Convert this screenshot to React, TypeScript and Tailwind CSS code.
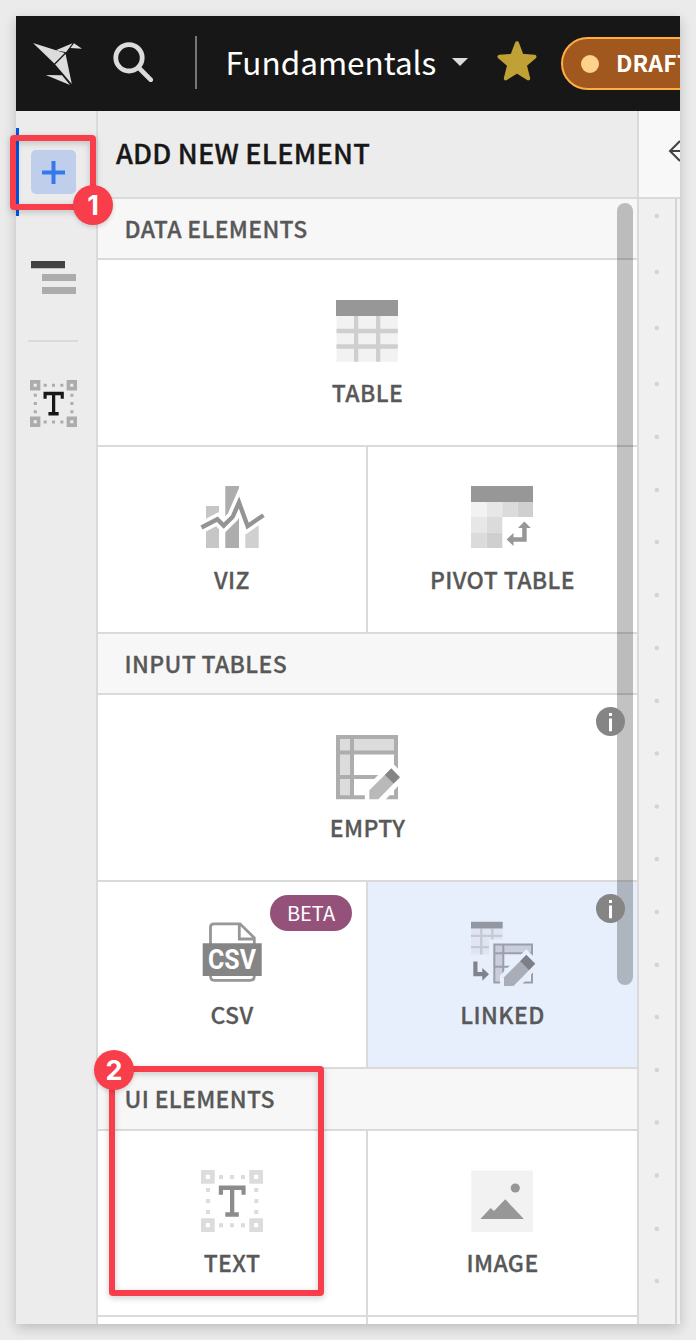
import type { ReactNode } from "react";

function BirdLogo() {
  return (
    <svg className="h-[42px] w-[49px] shrink-0" viewBox="0 0 49 42" fill="#dcdcdc">
      <path d="M0 0 31.7 10 21.3 20.4Z" />
      <path d="M22.8 7.2 39.5.3 33 9.2Z" />
      <path d="M41 .3 49.2 5.8 37.5 5Z" />
      <path d="M32.6 11 22.2 21.4 38.8 41Z" />
      <path d="M12.8 32 29 32.3 37 42Z" />
    </svg>
  );
}

function SearchIcon() {
  return (
    <svg className="h-10 w-10 shrink-0" viewBox="0 0 40 40" fill="none" stroke="#dcdcdc">
      <circle cx="16" cy="15.8" r="13.2" strokeWidth="4.8" />
      <path d="M25.5 25.5 37.8 37.8" strokeWidth="4.6" strokeLinecap="round" />
    </svg>
  );
}

function StarIcon() {
  return (
    <svg className="h-10 w-10 shrink-0" viewBox="0 0 40 40">
      <path
        d="M20 2.2 24.7 14.8 37.5 15.7 27.8 24 31.2 37.4 20 30.2 8.8 37.4 12.2 24 2.5 15.7 15.3 14.8Z"
        fill="#c0a136"
        stroke="#c0a136"
        strokeWidth="4"
        strokeLinejoin="round"
      />
    </svg>
  );
}

function OutlineIcon() {
  return (
    <svg className="h-[34px] w-[45px]" viewBox="0 0 45 34">
      <path d="M0 0H34V7.2H0Z" fill="#424242" />
      <path d="M11 13H45V20H11ZM11 26H45V33H11Z" fill="#acacac" />
    </svg>
  );
}

function TextIcon({ className, frame, glyph }: { className: string; frame: string; glyph: string }) {
  return (
    <svg className={className} viewBox="0 0 62 62">
      <g fill="none" stroke={frame} strokeWidth="4.8">
        <path d="M2.4 2.4h8.9v8.9h-8.9zM50.7 2.4h8.9v8.9h-8.9zM2.4 50.7h8.9v8.9h-8.9zM50.7 50.7h8.9v8.9h-8.9z" />
      </g>
      <path
        fill={frame}
        d="M18 5h4v4h-4zM29 5h4v4h-4zM40 5h4v4h-4zM18 53.3h4v4h-4zM29 53.3h4v4h-4zM40 53.3h4v4h-4zM5 18h4v4H5zM5 29h4v4H5zM5 40h4v4H5zM53.3 18h4v4h-4zM53.3 29h4v4h-4zM53.3 40h4v4h-4z"
      />
      <path fill={glyph} d="M17.8 15.6H44.6V24.7H40.5V20H33.3V42.3H37.8V46.7H24.3V42.3H29V20H22V24.7H17.8Z" />
    </svg>
  );
}

function TableIcon() {
  return (
    <svg className="h-[62px] w-[62px]" viewBox="0 0 62 62">
      <path d="M.5 15H61.8V61.8H.5Z" fill="#f2f2f2" />
      <path d="M18 15H22.3V61.8H18ZM40 15H44.3V61.8H40ZM.5 28.7H61.8V33.2H.5ZM.5 44.3H61.8V48.7H.5Z" fill="#cfcfcf" />
      <path d="M0 0H62V16H0Z" fill="#979797" />
    </svg>
  );
}

function VizIcon() {
  const line = "M.5 41.5 16.3 33.2 22.7 39.6 31.7 30.8 38 16.5 46.6 40 62.5 29.2";
  return (
    <svg className="h-[62px] w-[62px] -translate-y-px overflow-visible" viewBox="0 0 62 62" fill="none">
      <path d="M5 20H18V62H5Z" fill="#c6c6c6" />
      <path d="M24.3 0H38V62H24.3Z" fill="#adadad" />
      <path d="M44.3 36H57.7V62H44.3Z" fill="#d0d0d0" />
      <path d={line} stroke="#fff" strokeWidth="11.5" />
      <path d={line} stroke="#949494" strokeWidth="4.4" />
    </svg>
  );
}

function PivotIcon() {
  return (
    <svg className="h-[62px] w-[62px] -translate-y-px" viewBox="0 0 62 62">
      <path d="M0 16H15.7V31H0Z" fill="#f2f2f2" />
      <path d="M15.7 16H31.3V31H15.7ZM0 31H15.7V46.7H0Z" fill="#e7e7e7" />
      <path d="M31.3 16H46.7V31H31.3ZM15.7 31H31.3V46.7H15.7ZM0 46.7H15.7V62H0Z" fill="#dbdbdb" />
      <path d="M46.7 16H62V31H46.7ZM15.7 46.7H31.3V62H15.7Z" fill="#cfcfcf" />
      <path d="M0 0H62V16H0Z" fill="#979797" />
      <path
        d="M53.4 35.6 59.8 42H55.7V55.7H42.5V60L35.6 53.4 42.5 47V51.2H51.2V42H47Z"
        fill="#979797"
      />
    </svg>
  );
}

function EmptyIcon() {
  return (
    <svg className="h-[65px] w-[65px] shrink-0" viewBox="0 0 65 65">
      <path d="M0 0H62V64.3H0Z" fill="#adadad" />
      <path d="M4 4H14V15.6H4ZM18 4H58V15.6H18ZM4 19.6H14V40H4ZM4 44H14V60.3H4Z" fill="#dcdcdc" />
      <path d="M18 19.6H58V40H18ZM18 44H58V60.3H18Z" fill="#fff" />
      <path d="M55.3 33.3 33.3 55.3V66H42.3L64 42.3Z" fill="#fff" stroke="#fff" strokeWidth="9" />
      <path d="M48.7 40 33.3 55.3V64.2H42.3L57.5 48.8Z" fill="#b9b9b9" />
      <path d="M55.3 33.3 64 42.3 57.5 48.8 48.7 40Z" fill="#858585" />
    </svg>
  );
}

function CsvIcon() {
  return (
    <svg className="h-[62px] w-[62px]" viewBox="0 0 62 62">
      <path
        d="M9.5 22V5Q9.5 1.8 13 1.8H39L53.3 15.8V54.5Q53.3 58.3 49.5 58.3H13Q9.5 58.3 9.5 54Z M38.3 1.8V17H53.3"
        fill="none"
        stroke="#979797"
        strokeWidth="2.8"
      />
      <path d="M1.7 21.3H60.7V54H1.7Z" fill="#858585" />
      <text
        x="7"
        y="47.4"
        fill="#fff"
        textLength="48"
        lengthAdjust="spacingAndGlyphs"
        className="font-['Roboto'] text-[27.5px] font-bold"
      >
        CSV
      </text>
    </svg>
  );
}

function LinkedIcon() {
  return (
    <svg className="h-[65px] w-[65px] shrink-0 -translate-y-[0.5px]" viewBox="0 0 65 65">
      <path d="M0 7H31.5V18H18V33H0Z" fill="#e1e5f2" />
      <path d="M9 7H11.5V33H9ZM20.2 7H22.5V18H20.2ZM0 13.2H31.5V15.6H0ZM0 24.4H18V26.8H0Z" fill="#c5cad7" />
      <path d="M0 0H31.7V7H0Z" fill="#9297a2" />
      <path d="M2.3 40H6.5V50.6H11.3V46.4L18 52.7 11.3 59.2V54.8H2.3Z" fill="#80838b" />
      <path d="M22.3 22H62V62H22.3Z" fill="#9a9fab" />
      <path d="M24.3 24H31.3V30.7H24.3ZM33.3 24H60V30.7H33.3ZM24.3 32.7H31.3V44.3H24.3ZM24.3 46.3H31.3V60H24.3Z" fill="#c9cddc" />
      <path d="M33.3 32.7H60V44.3H33.3ZM33.3 46.3H60V60H33.3Z" fill="#e7eefc" />
      <path d="M55.3 33.3 33 55.7V66H42.7L64.3 42.3Z" fill="#e7eefc" stroke="#e7eefc" strokeWidth="8" />
      <path d="M49 39.8 33 55.7V64.5H42.5L58 48.7Z" fill="#a9adb7" />
      <path d="M55.3 33.3 64.3 42.3 58 48.7 49 39.8Z" fill="#7c7f88" />
    </svg>
  );
}

function ImageIcon() {
  return (
    <svg className="h-[62px] w-[62px]" viewBox="0 0 62 62" fill="#979797">
      <path d="M.3 .6H62V62H.3Z" fill="#f2f2f2" />
      <circle cx="44.3" cy="18" r="4.6" />
      <path d="M9.3 49 19.7 38 23 41 34.3 29.3 52.9 49Z" />
    </svg>
  );
}

function InfoBadge() {
  return (
    <svg className="absolute right-[12px] top-[12px] z-20 h-[29px] w-[29px]" viewBox="0 0 29 29">
      <circle cx="14.5" cy="14.5" r="14.5" fill="#858585" />
      <path d="M13 6H16V9H13ZM13 11.6H16V24.2H13Z" fill="#fff" />
    </svg>
  );
}

function SectionHeader({ children }: { children: ReactNode }) {
  return (
    <div className="flex h-full items-center border-b-2 border-[#dadada] bg-[#f7f7f7] pb-[2px] pl-[26.5px]">
      <span className="text-[23px] font-medium leading-6 tracking-[0.35px] text-[#585858] [-webkit-text-stroke:0.3px_#585858]">
        {children}
      </span>
    </div>
  );
}

function Tile({ icon, label, className = "bg-white pt-[40px]", children }: {
  icon: ReactNode;
  label: string;
  className?: string;
  children?: ReactNode;
}) {
  return (
    <div className={`relative flex h-full flex-col items-center ${className}`}>
      <div className="-ml-px flex h-[62px] w-[62px]">{icon}</div>
      <span className="mt-[18px] text-[23px] font-medium leading-6 tracking-[0.4px] text-[#585858] [-webkit-text-stroke:0.3px_#585858]">
        {label}
      </span>
      {children}
    </div>
  );
}

function WideRow({ children }: { children: ReactNode }) {
  return <div className="grid h-full border-b-2 border-[#dadada]">{children}</div>;
}

function SplitRow({ children }: { children: ReactNode }) {
  return (
    <div className="grid h-full grid-cols-[270px_1fr] divide-x-2 divide-[#dadada] border-b-2 border-[#dadada]">
      {children}
    </div>
  );
}

const dotRows = [
  216, 272, 328, 384, 437, 490, 542, 595, 648, 701, 753.5, 806.5, 859, 912, 965, 1017, 1070, 1122.5, 1175.5, 1229, 1281,
];

export default function App() {
  return (
    <div className="relative h-[1340px] w-[696px] overflow-hidden bg-[#ebebeb] p-4 font-['Noto_Sans_CJK_SC','Noto_Sans',sans-serif]">
      <div className="flex h-[1308px] w-[664px] flex-col overflow-hidden bg-white shadow-[0_4px_12px_rgba(0,0,0,0.2)]">
        <header className="flex h-[95px] shrink-0 items-center bg-[#171717] pl-[17px]">
          <BirdLogo />
          <div className="mb-[3px] ml-[31px] flex">
            <SearchIcon />
          </div>
          <div className="mb-[2px] ml-[42px] h-[53px] w-[2px] shrink-0 bg-[#777]" />
          <span className="mb-[6px] ml-[28.5px] w-[211.5px] shrink-0 whitespace-nowrap text-[31.5px] leading-10 text-white">
            Fundamentals
          </span>
          <svg className="mb-[3px] ml-[15px] h-2 w-4 shrink-0" viewBox="0 0 16 8">
            <path d="M0 0H16L8 8Z" fill="#dcdcdc" />
          </svg>
          <div className="mb-[6px] ml-[29px] flex">
            <StarIcon />
          </div>
          <div className="ml-[24px] flex h-[53px] w-[180px] shrink-0 items-center rounded-full border-2 border-[#ffae42] bg-[#a1581f] pl-[18px]">
            <span className="h-[18px] w-[18px] rounded-full bg-[#ffd28c]" />
            <span className="mb-[4px] ml-[17px] text-[23px] font-bold leading-6 tracking-[0.2px] text-white">DRAFT</span>
          </div>
        </header>
        <div className="flex min-h-0 flex-1">
          <nav className="flex w-[82px] shrink-0 flex-col border-r-2 border-[#dadada] bg-[#ececec] pt-[17px]">
            <div className="flex h-[88px] items-center border-l-[3px] border-[#0057e5] pl-[12px]">
              <div className="flex h-[44px] w-[45px] items-center justify-center rounded-[5px] bg-[#bfceea]">
                <svg className="h-[23px] w-[23px]" viewBox="0 0 23 23">
                  <path d="M11.5 0V23M0 11.5H23" stroke="#3478ec" strokeWidth="4" />
                </svg>
              </div>
            </div>
            <div className="mt-[45px] flex pl-[15px]">
              <OutlineIcon />
            </div>
            <div className="ml-[12px] mt-[45px] h-[2px] w-[50px] bg-[#dadada]" />
            <div className="mt-[38px] flex pl-[14px]">
              <TextIcon className="h-[47px] w-[47px]" frame="#acacac" glyph="#171717" />
            </div>
          </nav>
          <main className="relative flex w-[539px] shrink-0 flex-col">
            <div className="flex h-[88px] shrink-0 items-center border-b-2 border-[#dadada] bg-[#ececec] pb-[4px] pl-[18px]">
              <h1 className="text-[27.2px] font-medium leading-8 tracking-[0.2px] text-[#171717] [-webkit-text-stroke:0.35px_#171717]">
                ADD NEW ELEMENT
              </h1>
            </div>
            <div className="grid min-h-0 flex-1 grid-rows-[61px_187px_187px_61px_187px_187px_62px_186px_7px]">
              <SectionHeader>DATA ELEMENTS</SectionHeader>
              <WideRow>
                <Tile icon={<TableIcon />} label="TABLE" />
              </WideRow>
              <SplitRow>
                <Tile icon={<VizIcon />} label="VIZ" />
                <Tile icon={<PivotIcon />} label="PIVOT TABLE" />
              </SplitRow>
              <SectionHeader>INPUT TABLES</SectionHeader>
              <WideRow>
                <Tile icon={<EmptyIcon />} label="EMPTY">
                  <InfoBadge />
                </Tile>
              </WideRow>
              <SplitRow>
                <Tile icon={<CsvIcon />} label="CSV">
                  <span className="absolute right-[14px] top-[13px] flex h-[36px] w-[82px] items-center justify-center rounded-full bg-[#94527a] text-[20px] leading-5 text-white">
                    BETA
                  </span>
                </Tile>
                <Tile icon={<LinkedIcon />} label="LINKED" className="bg-[#e7eefc] pt-[40px]">
                  <InfoBadge />
                </Tile>
              </SplitRow>
              <SectionHeader>UI ELEMENTS</SectionHeader>
              <SplitRow>
                <Tile
                  icon={<TextIcon className="h-[62px] w-[62px]" frame="#dcdcdc" glyph="#8c8c8c" />}
                  label="TEXT"
                  className="bg-white pt-[39px]"
                />
                <Tile icon={<ImageIcon />} label="IMAGE" className="bg-white pt-[39px]" />
              </SplitRow>
              <div className="grid grid-cols-[270px_1fr] divide-x-2 divide-[#dadada]">
                <div className="bg-white" />
                <div className="bg-white" />
              </div>
            </div>
            <div className="absolute right-[4px] top-[92px] z-10 h-[782px] w-4 rounded-full bg-black/24" />
          </main>
          <aside className="flex min-w-0 flex-1 flex-col border-l-2 border-[#dadada]">
            <div className="flex h-[88px] shrink-0 items-center overflow-hidden border-b-2 border-[#dadada] bg-[#f8f8f8] pl-[29px]">
              <svg className="-mt-[7px] h-[22px] w-[22px] shrink-0" viewBox="0 0 22 22" fill="none" stroke="#424242" strokeWidth="2">
                <path d="M12 1 2 11 12 21M2 11H22" />
              </svg>
            </div>
            <div className="flex min-h-0 flex-1 bg-[#f0f0f0]">
              <svg className="h-[1125px] w-[36px] shrink-0" viewBox="639 199 36 1125" fill="#d4d4d4">
                {dotRows.map((y) => (
                  <circle key={y} cx="656.8" cy={y} r="2.3" />
                ))}
              </svg>
              <div className="w-[2px] bg-[#d4d4d4]" />
              <div className="flex-1 bg-[#f2f2f2]" />
            </div>
          </aside>
        </div>
      </div>

      <div className="absolute left-[10px] top-[135px] z-30 h-[75px] w-[86px] rounded-[4px] border-6 border-[#f83d4b] drop-shadow-[0_2px_3px_rgba(0,0,0,0.2)]" />
      <div className="absolute left-[73px] top-[185px] z-30 flex h-10 w-10 items-center justify-center rounded-full bg-[#f83d4b] font-['Inter',sans-serif] text-[27px] font-bold leading-none text-white shadow-[0_2px_4px_rgba(0,0,0,0.15)]">
        1
      </div>
      <div className="absolute left-[109px] top-[1066px] z-30 h-[230px] w-[215px] rounded-[4px] border-6 border-[#f83d4b] drop-shadow-[0_2px_3px_rgba(0,0,0,0.2)]" />
      <div className="absolute left-[94px] top-[1050px] z-30 flex h-10 w-10 items-center justify-center rounded-full bg-[#f83d4b] font-['Inter',sans-serif] text-[27px] font-bold leading-none text-white shadow-[0_2px_4px_rgba(0,0,0,0.15)]">
        2
      </div>
    </div>
  );
}
